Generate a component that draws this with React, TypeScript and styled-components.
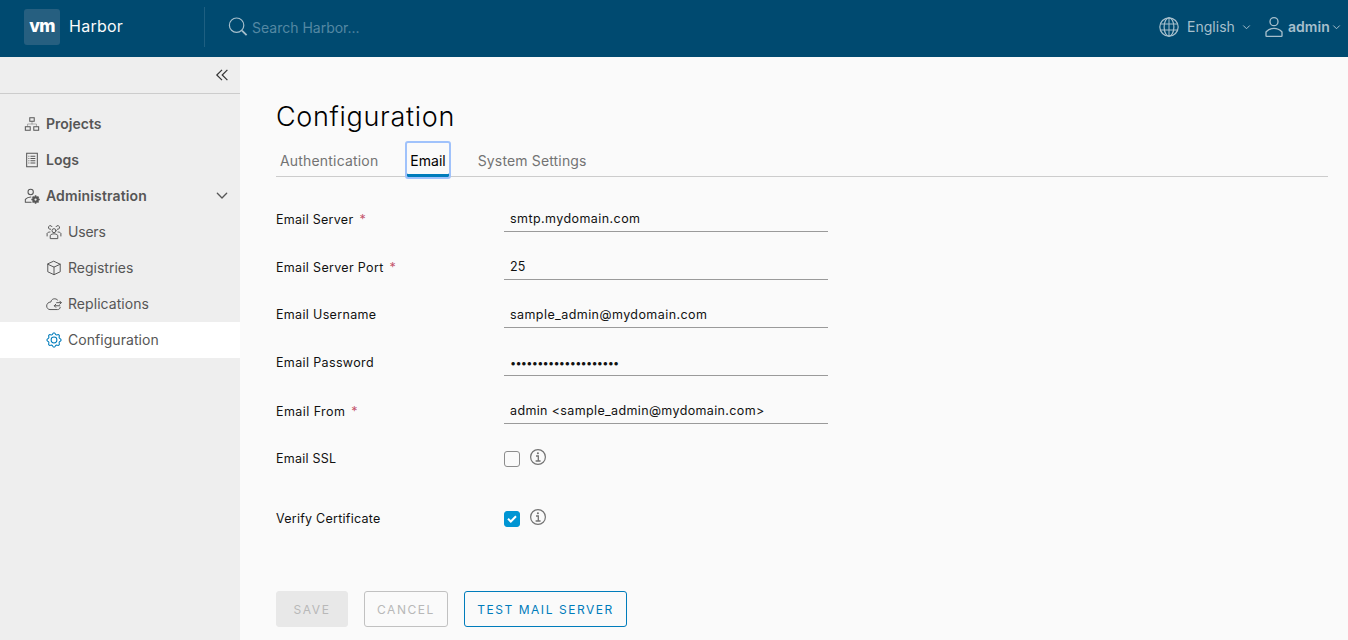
import React, { useState } from 'react';
import styled, { createGlobalStyle, css } from 'styled-components';

const GlobalStyle = createGlobalStyle`
  *, *::before, *::after { box-sizing: border-box; }
  body { margin: 0; background: #fafafa; color: #000; font-family: Inter, "Open Sans", sans-serif; }
  button, input { font-family: inherit; }
`;

const Page = styled.div`
  display: flex;
  flex-direction: column;
  height: 640px;
  overflow: hidden;
`;

/* ---------- header ---------- */
const Header = styled.header`
  flex: none;
  display: flex;
  align-items: center;
  height: 57px;
  padding: 0 7px 3px 24px;
  background: #004a70;
  color: #fafafa;
`;
const Brand = styled.div`
  display: flex;
  align-items: center;
  gap: 9px;
  width: 180px;
`;
const Logo = styled.div`
  width: 36px;
  height: 36px;
  border-radius: 3px;
  background: #265f80;
  color: #fff;
  font: 800 17.5px/34px Inter, sans-serif;
  letter-spacing: -0.7px;
  text-align: center;
`;
const Title = styled.span`
  padding-bottom: 2px;
  font-size: 16px;
  letter-spacing: 0.25px;
`;
const Search = styled.label`
  display: flex;
  align-items: center;
  flex: 1;
  height: 40px;
  padding-left: 23px;
  gap: 4px;
  border-left: 1px solid #1e5f81;
`;
const SearchInput = styled.input`
  width: 240px;
  padding: 0;
  border: 0;
  outline: 0;
  background: transparent;
  color: #fafafa;
  font-size: 14px;
  &::placeholder { color: #5488a3; opacity: 1; }
`;
const HeaderMenu = styled.button<{ $strong?: boolean }>`
  display: flex;
  align-items: center;
  padding: 0;
  border: 0;
  background: none;
  color: #a6bfcc;
  font-size: 14px;
  font-weight: ${(p) => (p.$strong ? 600 : 400)};
  letter-spacing: ${(p) => (p.$strong ? '0.1px' : '0.02px')};
  margin-left: ${(p) => (p.$strong ? '11px' : '0')};
  & > svg:first-child { margin-right: ${(p) => (p.$strong ? '2px' : '7px')}; }
  & > svg:last-child { margin-left: ${(p) => (p.$strong ? '2px' : '7px')}; }
`;
const MenuText = styled.span`
  padding-bottom: 2px;
`;

/* ---------- sidebar ---------- */
const Body = styled.div`
  display: flex;
  flex: 1;
  min-height: 0;
`;
const Sidebar = styled.nav`
  flex: none;
  width: 240px;
  background: #eee;
  color: #565656;
`;
const CollapseBar = styled.div`
  display: flex;
  justify-content: flex-end;
  align-items: center;
  height: 37px;
  padding-right: 11px;
  border-bottom: 1px solid #ccc;
  color: #333;
`;
const NavList = styled.div`
  padding-top: 12px;
`;
const NavItem = styled.a<{ $level: 1 | 2; $active?: boolean; $spacing?: number }>`
  display: flex;
  align-items: center;
  gap: 6px;
  height: 36px;
  font-size: 14px;
  letter-spacing: ${(p) => p.$spacing ?? 0}px;
  ${(p) =>
    p.$level === 1
      ? css`
          padding: 0 11px 0 24px;
          font-weight: 600;
        `
      : css`
          padding: 0 11px 0 46px;
        `}
  ${(p) =>
    p.$active &&
    css`
      background: #fff;
      & > svg { color: #007cbb; }
    `}
`;
const NavLabel = styled.span`
  flex: 1;
  padding-bottom: 2px;
`;

/* ---------- content ---------- */
const Content = styled.main`
  flex: 1;
  padding: 41px 20px 0 36px;
`;
const Heading = styled.h1`
  margin: 0;
  font-size: 27px;
  line-height: 38px;
  font-weight: 300;
  letter-spacing: 0.68px;
`;
const Tabs = styled.div`
  display: flex;
  align-items: flex-end;
  height: 36px;
  margin-top: 5px;
  padding-left: 1px;
  border-bottom: 1px solid #ccc;
`;
const Tab = styled.button<{ $active?: boolean; $spacing: number }>`
  height: 34px;
  margin: 0 26px -1px 0;
  padding: 1px 3px 0;
  border: 0;
  background: none;
  color: ${(p) => (p.$active ? '#000' : '#737373')};
  font-size: 14px;
  letter-spacing: ${(p) => p.$spacing}px;
  ${(p) =>
    p.$active &&
    css`
      box-shadow: inset 0 -3px 0 #007cbb;
      outline: 2px solid #a0c2fb;
      border-radius: 1px;
    `}
`;
const Form = styled.form`
  padding-top: 18px;
`;
const Field = styled.div<{ $tall?: boolean }>`
  display: flex;
  align-items: flex-start;
  height: ${(p) => (p.$tall ? 60 : 48)}px;
`;
const Label = styled.label<{ $spacing?: number; $required?: boolean }>`
  width: 228px;
  padding-top: ${(p) => (p.$required ? 17 : 16)}px;
  color: #111;
  font-size: 12.5px;
  line-height: 16px;
  letter-spacing: ${(p) => p.$spacing ?? 0.25}px;
`;
const Asterisk = styled.span`
  margin-left: 6px;
  color: #c4556b;
`;
const TextInput = styled.input<{ $spacing: number }>`
  width: 324px;
  height: 37px;
  padding: 11px 6px 0;
  border: 0;
  border-bottom: 1px solid #9a9a9a;
  outline: 0;
  background: transparent;
  color: #111;
  font-size: ${(p) => (p.type === 'password' ? 11 : 12.5)}px;
  letter-spacing: ${(p) => p.$spacing}px;
`;
const Option = styled.div`
  display: flex;
  padding-top: 14px;
  gap: 10px;
  color: #737373;
`;
const Check = styled.span<{ $on?: boolean }>`
  display: grid;
  place-items: center;
  width: 16px;
  height: 16px;
  margin-top: 2px;
  border: 1px solid ${(p) => (p.$on ? '#0095d3' : '#8c8c8c')};
  border-radius: 3px;
  background: ${(p) => (p.$on ? '#0095d3' : 'transparent')};
`;
const Actions = styled.div`
  display: flex;
  gap: 16px;
  margin-top: 36px;
`;
const Button = styled.button<{ $kind: 'solid' | 'muted' | 'primary'; $width: number }>`
  width: ${(p) => p.$width}px;
  height: 36px;
  padding: 1px 0 0;
  border: 1px solid #c1c1c1;
  border-radius: 3px;
  background: transparent;
  color: #b8b8b8;
  font-size: 12px;
  letter-spacing: 1.55px;
  ${(p) => p.$kind === 'solid' && css`border-color: #e8e8e8; background: #e8e8e8;`}
  ${(p) => p.$kind === 'primary' && css`border-color: #007cbb; color: #007cbb;`}
`;

/* ---------- icons ---------- */
type IconProps = { size?: number; children: React.ReactNode; w?: number };
const Line = ({ size = 16, w = 2, children }: IconProps) => (
  <svg width={size} height={size} viewBox="0 0 36 36" fill="none" stroke="currentColor" strokeWidth={w} strokeLinejoin="round" strokeLinecap="round">
    {children}
  </svg>
);
const Caret = ({ size, w }: { size: number; w: number }) => (
  <Line size={size} w={w}><path d="M6 11 18 23 30 11" /></Line>
);
const SearchIcon = () => (
  <svg width="20" height="20" viewBox="0 0 20 20" fill="none" stroke="#a6bfcc" strokeWidth="1.2">
    <circle cx="8.6" cy="8.2" r="7.2" />
    <path d="M14 13.6 18.6 18.2" strokeWidth="1.8" />
  </svg>
);
const GlobeIcon = () => (
  <Line size={22} w={2}>
    <circle cx="18" cy="18" r="15" />
    <ellipse cx="18" cy="18" rx="8" ry="15" />
    <path d="M18 3v30M4.5 13h27M4.5 23h27" strokeWidth="1.7" />
  </Line>
);
const UserIcon = () => (
  <svg width="24" height="24" viewBox="0 0 36 36" fill="currentColor">
    <path d="M18,17a7,7,0,1,0-7-7A7,7,0,0,0,18,17ZM18,5a5,5,0,1,1-5,5A5,5,0,0,1,18,5Z" />
    <path d="M30.47,24.37a17.16,17.16,0,0,0-24.93,0A2,2,0,0,0,5,25.74V31a2,2,0,0,0,2,2H29a2,2,0,0,0,2-2V25.74A2,2,0,0,0,30.47,24.37ZM29,31H7V25.73a15.17,15.17,0,0,1,22,0h0Z" />
  </svg>
);
const CollapseIcon = () => (
  <svg width="14" height="14" viewBox="0 0 14 14" fill="none" stroke="currentColor" strokeWidth="1.2">
    <path d="M7 1.8 1.8 7 7 12.2M12.4 1.8 7.2 7l5.2 5.2" />
  </svg>
);
const ProjectsIcon = () => (
  <Line w={2.3}>
    <path d="M13 4h10v8H13zM3 24h11v8H3zM22 24h11v8H22z" strokeLinejoin="miter" />
    <path d="M18 12v6M8 23v-5h20v5" strokeWidth="1.6" opacity=".6" />
  </Line>
);
const LogsIcon = () => (
  <Line w={2.3}>
    <path d="M6 3h24v30H6z" strokeLinejoin="miter" />
    <path d="M14.5 9.5h11M14.5 14.5h11M14.5 19.5h11M14.5 24.5h11M10 9.5h2M10 14.5h2M10 19.5h2M10 24.5h2" strokeLinecap="butt" />
  </Line>
);
const AdminIcon = () => (
  <Line w={2.3}>
    <circle cx="15" cy="9" r="6" />
    <path d="M16 32H3v-6.5C6 22 10 20 15.5 20" />
    <circle cx="26" cy="26" r="5" strokeWidth="5" />
    <path d="M26 16.5v4M26 31.5v4M16.5 26h4M31.5 26h4M19.3 19.3l2.8 2.8M29.9 29.9l2.8 2.8M32.7 19.3l-2.8 2.8M22.1 29.9l-2.8 2.8" strokeWidth="3.6" strokeLinecap="butt" />
  </Line>
);
const UsersIcon = () => (
  <Line w={2.2}>
    <circle cx="18" cy="15" r="4.5" />
    <path d="M9.5 32v-6.5c4-4.5 13-4.5 17 0V32z" />
    <path d="M10.5 12A4.2 4.2 0 1 1 13.5 6M25.5 12A4.2 4.2 0 1 0 22.5 6M9 18c-3 0-5 1-6.500 3v6M27 18c3 0 5 1 6.500 3v6" />
  </Line>
);
const RegistriesIcon = () => (
  <Line w={2.2}>
    <path d="M18 3 32 9.500v17L18 33 4 26.500v-17zM4 9.500l14 6.500 14-6.500M18 16v17" />
  </Line>
);
const ReplicationsIcon = () => (
  <Line w={2.2}>
    <path d="M26 9C22 4 12 5.500 11 13.500 5 13.500 1.500 18 1.500 22.500S5 30.500 9 30.500h17c3.500 0 5.500-2 6-5" />
    <path d="M24 15h10M31 11.500l3.500 3.500-3.500 3.500M31 22H19M22 18.500 18.500 22l3.500 3.500" />
  </Line>
);
const cog = Array.from({ length: 64 }, (_, i) => {
  const a = (i / 64) * Math.PI * 2;
  const r = 14.3 + 1.6 * Math.tanh(2 * Math.cos(8 * a));
  return `${(18 + r * Math.cos(a)).toFixed(2)} ${(18 + r * Math.sin(a)).toFixed(2)}`;
}).join('L');
const CogIcon = () => (
  <Line w={2.3}>
    <path d={`M${cog}Z`} />
    <circle cx="18" cy="18" r="6.5" />
  </Line>
);
const InfoIcon = () => (
  <svg width="16" height="16" viewBox="0 0 16 16" fill="none" stroke="currentColor">
    <circle cx="8" cy="8" r="7.4" strokeWidth="1.2" />
    <path d="M6 7h2.3v5M5.6 12h5" strokeWidth="1.3" />
    <circle cx="7.9" cy="4.2" r="1.05" fill="currentColor" stroke="none" />
  </svg>
);
const Tick = () => (
  <svg width="10" height="8" viewBox="0 0 10 8" fill="none" stroke="#fff" strokeWidth="2">
    <path d="M1 3.8 3.8 6.5 9 1.3" />
  </svg>
);

const fields = [
  { label: 'Email Server', value: 'smtp.mydomain.com', required: true, ls: 0.28, vs: 0.43 },
  { label: 'Email Server Port', value: '25', required: true, ls: 0.33, vs: 0.25 },
  { label: 'Email Username', value: 'sample_admin@mydomain.com', ls: 0.33, vs: 0.43 },
  { label: 'Email Password', value: 'harbor-mail-secret-1', ls: 0.36, vs: -0.76, secret: true },
  { label: 'Email From', value: 'admin <sample_admin@mydomain.com>', required: true, ls: 0.43, vs: 0.36 },
];

export default function App() {
  const [ssl, setSsl] = useState(false);
  const [verify, setVerify] = useState(true);
  return (
    <Page>
      <GlobalStyle />
      <Header>
        <Brand>
          <Logo>vm</Logo>
          <Title>Harbor</Title>
        </Brand>
        <Search>
          <SearchIcon />
          <SearchInput placeholder="Search Harbor..." />
        </Search>
        <HeaderMenu><GlobeIcon /><MenuText>English</MenuText><Caret size={9} w={4} /></HeaderMenu>
        <HeaderMenu $strong><UserIcon /><MenuText>admin</MenuText><Caret size={9} w={4} /></HeaderMenu>
      </Header>
      <Body>
        <Sidebar>
          <CollapseBar><CollapseIcon /></CollapseBar>
          <NavList>
            <NavItem $level={1}><ProjectsIcon /><NavLabel>Projects</NavLabel></NavItem>
            <NavItem $level={1}><LogsIcon /><NavLabel>Logs</NavLabel></NavItem>
            <NavItem $level={1} $spacing={0.14}><AdminIcon /><NavLabel>Administration</NavLabel><Caret size={14} w={3.4} /></NavItem>
            <NavItem $level={2} $spacing={-0.2}><UsersIcon /><NavLabel>Users</NavLabel></NavItem>
            <NavItem $level={2}><RegistriesIcon /><NavLabel>Registries</NavLabel></NavItem>
            <NavItem $level={2} $spacing={0.05}><ReplicationsIcon /><NavLabel>Replications</NavLabel></NavItem>
            <NavItem $level={2} $spacing={0.05} $active><CogIcon /><NavLabel>Configuration</NavLabel></NavItem>
          </NavList>
        </Sidebar>
        <Content>
          <Heading>Configuration</Heading>
          <Tabs>
            <Tab $spacing={0.18}>Authentication</Tab>
            <Tab $spacing={0} $active>Email</Tab>
            <Tab $spacing={0.15}>System Settings</Tab>
          </Tabs>
          <Form onSubmit={(e) => e.preventDefault()}>
            {fields.map((f) => (
              <Field key={f.label}>
                <Label $spacing={f.ls} $required={f.required}>
                  {f.label}
                  {f.required && <Asterisk>*</Asterisk>}
                </Label>
                <TextInput type={f.secret ? 'password' : 'text'} defaultValue={f.value} $spacing={f.vs} />
              </Field>
            ))}
            <Field $tall>
              <Label>Email SSL</Label>
              <Option>
                <Check $on={ssl} onClick={() => setSsl(!ssl)}>{ssl && <Tick />}</Check>
                <InfoIcon />
              </Option>
            </Field>
            <Field $tall>
              <Label>Verify Certificate</Label>
              <Option>
                <Check $on={verify} onClick={() => setVerify(!verify)}>{verify && <Tick />}</Check>
                <InfoIcon />
              </Option>
            </Field>
            <Actions>
              <Button type="button" $kind="solid" $width={72}>SAVE</Button>
              <Button type="button" $kind="muted" $width={84}>CANCEL</Button>
              <Button type="button" $kind="primary" $width={163}>TEST MAIL SERVER</Button>
            </Actions>
          </Form>
        </Content>
      </Body>
    </Page>
  );
}
